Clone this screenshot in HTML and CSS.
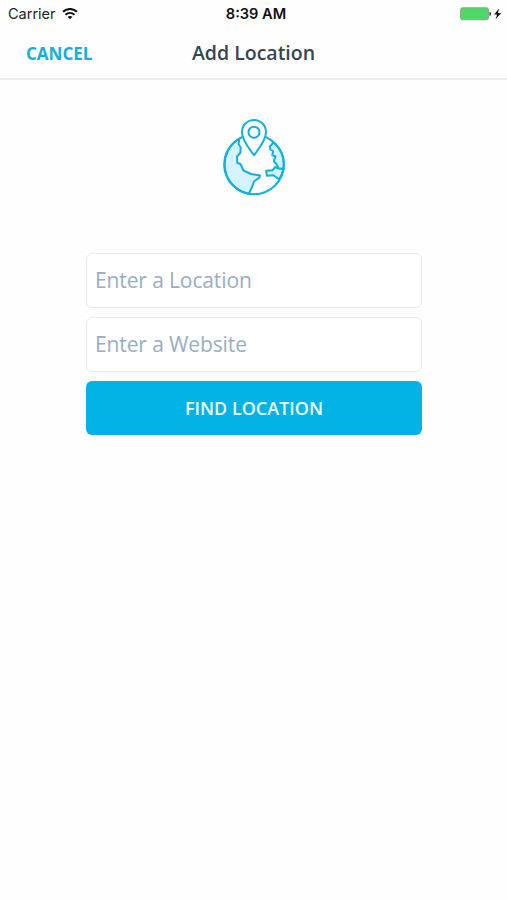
FILE: index.html
```html
<!DOCTYPE html>
<html lang="en">
<head>
<meta charset="UTF-8">
<meta name="viewport" content="width=device-width, initial-scale=1.0">
<title>Add Location</title>
<link rel="stylesheet" href="styles.css">
</head>
<body>
    <div class="status-bar">
        <div class="carrier">
            <span>Carrier</span>
            <svg class="wifi" width="16" height="12" viewBox="0 0 16 12" fill="none" stroke="#111" stroke-width="2">
                <path d="M1 3.8C5 0 11 0 15 3.8"/>
                <path d="M3.5 6.8C6.2 4.3 9.8 4.3 12.5 6.8"/>
                <path d="M5.6 8.8C7 7.6 9 7.6 10.4 8.8L8 11.3Z" fill="#111" stroke="none"/>
            </svg>
        </div>
        <span class="time">8:39 AM</span>
        <div class="power">
            <svg width="42" height="14" viewBox="0 0 42 14">
                <rect x=".5" y=".8" width="28" height="12" rx="2" fill="#4cd964" stroke="#93a697"/>
                <path d="M29.5 5C31.4 5 31.4 8.8 29.5 8.8Z" fill="#111"/>
                <path d="M39 1.4L34.2 7.5H37L35.6 12.2L41.2 5.9H38Z" fill="#111"/>
            </svg>
        </div>
    </div>
    <header class="navbar">
        <a href="#" class="cancel">CANCEL</a>
        <h1>Add Location</h1>
    </header>
    <main>
        <svg class="globe" width="80" height="95" viewBox="0 0 80 95" fill="none" stroke="#10b1dc" stroke-width="2" stroke-linejoin="round" stroke-linecap="round">
            <!-- land -->
            <path d="M25.5 28.5L24.5 34L26.7 37.5L26.3 43L23 46.5L23.3 53L26.5 54L29.5 60.5L37 64L46 65.5L45.5 67.5L40 71.5L38 77L34.8 83.8A30 30 0 0 1 25.5 28.5Z" fill="#d3f4fd"/>
            <path d="M59.5 32.5L56 36.5L56.3 39.5L59 41L58.3 45.3L61.5 46.3L59.8 51.3L62.5 54L64.5 58.5L69.6 59A30 30 0 0 0 59.5 32.5Z" fill="#d3f4fd"/>
            <path d="M69.6 59L64.5 58.5L61 57L58.5 60.3L52.2 60.8L52.8 65.7L59.5 65.3L65 69.5A30 30 0 0 0 69.6 59Z" fill="#d3f4fd"/>
            <circle cx="40" cy="54.5" r="29.8"/>
            <!-- pin -->
            <path d="M40 45.2C36 39.5 28 31 28 22A12 12 0 0 1 52 22C52 31 44 39.5 40 45.2Z" fill="#fff"/>
            <circle cx="40" cy="22.2" r="5.5"/>
        </svg>
        <form class="location-form">
            <input type="text" placeholder="Enter a Location">
            <input type="text" placeholder="Enter a Website">
            <button type="button">FIND LOCATION</button>
        </form>
    </main>
</body>
</html>
```
FILE: styles.css
```css
* {
    box-sizing: border-box;
}
body {
    margin: 0;
    background: #fefefe;
    font-family: "Open Sans", "Noto Sans", sans-serif;
}
.status-bar {
    display: grid;
    grid-template-columns: 1fr auto 1fr;
    align-items: center;
    height: 27px;
    padding: 0 5px 0 8px;
    font-family: Inter, Roboto, sans-serif;
    font-size: 14.5px;
    color: #222;
}
.carrier {
    display: flex;
    align-items: center;
    gap: 6px;
}
.time {
    padding-left: 2px;
    font-weight: 600;
    font-size: 14.6px;
    color: #111;
}
.power {
    display: flex;
    justify-content: flex-end;
}

/* navbar */
.navbar {
    display: grid;
    grid-template-columns: 1fr auto 1fr;
    align-items: center;
    height: 53px;
    padding: 0 26px;
    border-bottom: 2px solid #ededee;
}
.cancel {
    padding-top: 1px;
    font-size: 17px;
    font-weight: 700;
    color: #14b0dc;
    text-decoration: none;
}
h1 {
    margin: 0;
    font-size: 19.5px;
    font-weight: 600;
    color: #364650;
}

main {
    display: flex;
    flex-direction: column;
    align-items: center;
    padding: 30px 0 0 1px;
}
.location-form {
    display: flex;
    flex-direction: column;
    gap: 9px;
    width: 336px;
    margin-top: 48px;
}
.location-form input {
    height: 55px;
    padding: 0 8px 1px;
    border: 1px solid #ebebec;
    border-radius: 6px;
    background: #fff;
    font: 400 21px "Open Sans", sans-serif;
    letter-spacing: -.12px;
    outline: none;
}
.location-form input::placeholder {
    color: #99aec2;
    opacity: 1;
}
.location-form button {
    height: 54px;
    padding: 0;
    border: none;
    border-radius: 6px;
    background: #04b3e5;
    color: #f0fcff;
    font: 600 18px "Open Sans", sans-serif;
}
```
